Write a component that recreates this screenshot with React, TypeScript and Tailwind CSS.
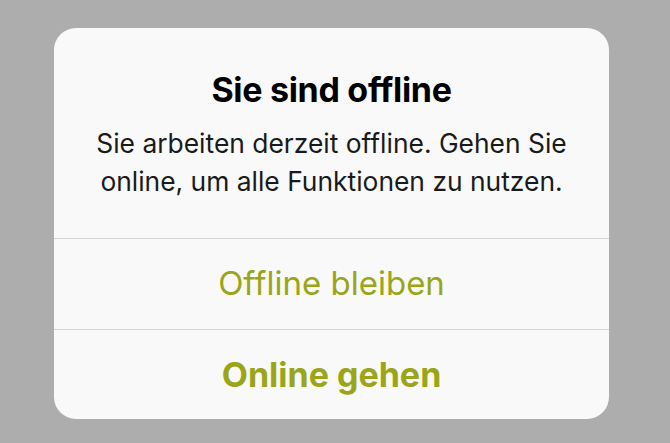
export default function App() {
  return (
    <div className="h-screen w-full bg-[#adadad] pt-[28px] pl-[54px]" style={{ fontFamily: 'Inter, "Liberation Sans", sans-serif' }}>
      <div className="w-[555px] overflow-hidden rounded-[22px] bg-[#f9f9f9]">
        <div className="flex h-[210px] flex-col items-center px-4 pt-[42px]">
          <h1 className="text-[34px] font-bold leading-[40px] tracking-[-0.3px] text-black">Sie sind offline</h1>
          <p className="mt-[14px] whitespace-nowrap text-center text-[26.4px] leading-[38px] text-[#1a1a1a]">
            Sie arbeiten derzeit offline. Gehen Sie
            <br />
            online, um alle Funktionen zu nutzen.
          </p>
        </div>
        <button className="flex h-[91px] w-full items-center justify-center border-t border-[#d6d6d6] text-[33px] text-[#9aa518]">
          Offline bleiben
        </button>
        <button className="flex h-[90px] w-full items-center justify-center border-t border-[#d6d6d6] text-[34px] font-bold text-[#9aa518]">
          Online gehen
        </button>
      </div>
    </div>
  );
}
